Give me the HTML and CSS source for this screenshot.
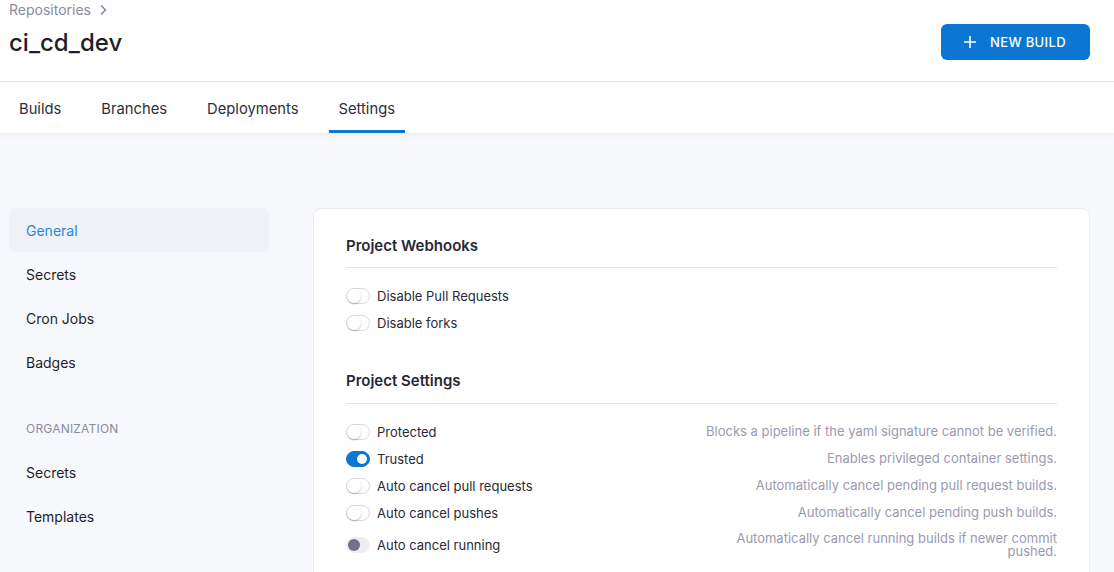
FILE: index.html
```html
<!DOCTYPE html>
<html>
<head>
<meta charset="utf-8">
<link rel="stylesheet" href="styles.css">
</head>
<body>
<header class="header">
  <div class="header-top">
    <div class="title-block">
      <div class="breadcrumb">Repositories <svg class="chev" width="10" height="12" viewBox="0 0 10 12"><path d="M3 1.5 L7.5 6 L3 10.5" fill="none" stroke="#8a8aa0" stroke-width="1.6"/></svg></div>
      <h1 class="title">ci_cd_dev</h1>
    </div>
    <button class="btn-new"><svg width="14" height="14" viewBox="0 0 14 14"><path d="M7 1v12M1 7h12" stroke="#fff" stroke-width="1.6"/></svg><span>NEW BUILD</span></button>
  </div>
  <nav class="tabs">
    <a class="tab">Builds</a>
    <a class="tab">Branches</a>
    <a class="tab">Deployments</a>
    <a class="tab active">Settings</a>
  </nav>
</header>
<main class="main">
  <aside class="sidebar">
    <a class="side-item active">General</a>
    <a class="side-item">Secrets</a>
    <a class="side-item">Cron Jobs</a>
    <a class="side-item">Badges</a>
    <div class="side-label">ORGANIZATION</div>
    <a class="side-item">Secrets</a>
    <a class="side-item">Templates</a>
  </aside>
  <section class="card">
    <h2 class="card-title">Project Webhooks</h2>
    <div class="rows">
      <div class="row"><span class="toggle"></span><span class="label">Disable Pull Requests</span></div>
      <div class="row"><span class="toggle"></span><span class="label">Disable forks</span></div>
    </div>
    <h2 class="card-title second">Project Settings</h2>
    <div class="rows">
      <div class="row"><span class="toggle"></span><span class="label">Protected</span><span class="desc">Blocks a pipeline if the yaml signature cannot be verified.</span></div>
      <div class="row"><span class="toggle on"></span><span class="label">Trusted</span><span class="desc">Enables privileged container settings.</span></div>
      <div class="row"><span class="toggle"></span><span class="label">Auto cancel pull requests</span><span class="desc">Automatically cancel pending pull request builds.</span></div>
      <div class="row"><span class="toggle"></span><span class="label">Auto cancel pushes</span><span class="desc">Automatically cancel pending push builds.</span></div>
      <div class="row tall"><span class="toggle disabled"></span><span class="label">Auto cancel running</span><span class="desc">Automatically cancel running builds if newer commit<br>pushed.</span></div>
    </div>
  </section>
</main>
</body>
</html>
```
FILE: styles.css
```css
* { box-sizing: border-box; }
html, body { margin: 0; padding: 0; }
body {
  font-family: Inter, "Noto Sans", sans-serif;
  background: #f7f8fb;
  color: #1f1f2b;
  width: 1114px;
  height: 572px;
  overflow: hidden;
}
.header {
  background: #fff;
  box-shadow: 0 2px 4px rgba(0,0,0,0.05);
  position: relative;
  z-index: 1;
}
.header-top {
  height: 82px;
  border-bottom: 1px solid #e3e3e8;
  display: flex;
  justify-content: space-between;
  padding: 0 24px 0 9px;
}
.breadcrumb {
  font-size: 14px;
  color: #8a8aa0;
  padding-top: 1px;
  line-height: 18px;
  display: flex;
  align-items: center;
  gap: 7px;
}
.title {
  margin: 0;
  margin-top: 9px;
  font-size: 24px;
  font-weight: 500;
  line-height: 30px;
  color: #1f1f2b;
}
.btn-new {
  margin-top: 24px;
  height: 36px;
  width: 149px;
  background: #0b77d3;
  border: 0;
  border-radius: 6px;
  color: #fff;
  font-family: Inter, sans-serif;
  font-size: 13px;
  font-weight: 500;
  letter-spacing: 0.35px;
  display: flex;
  align-items: center;
  justify-content: center;
  gap: 13px;
  padding: 0 2px 0 0;
}
.tabs {
  height: 51px;
  display: flex;
  padding-left: 9px;
  gap: 20px;
}
.tab {
  padding: 5px 10px 0 10px;
  font-size: 14.75px;
  color: #2e2e3a;
  display: flex;
  align-items: center;
  height: 51px;
  border-bottom: 3px solid transparent;
}
.tab.active {
  border-bottom-color: #0b77d3;
  padding-left: 9px;
  padding-right: 10px;
  margin-left: 1px;
}
.main {
  display: flex;
  padding: 75px 24px 0 9px;
  gap: 44px;
  align-items: flex-start;
}
.sidebar {
  width: 260px;
  display: flex;
  flex-direction: column;
  flex-shrink: 0;
}
.side-item {
  height: 44px;
  display: flex;
  align-items: center;
  padding-left: 17px;
  font-size: 14px;
  color: #1f1f2b;
  border-radius: 6px;
}
.side-item.active {
  background: #f0f2f7;
  color: #1f88e5;
}
.side-label {
  margin-top: 22px;
  height: 44px;
  display: flex;
  align-items: center;
  padding-left: 17px;
  font-size: 12px;
  color: #8a8aa0;
  letter-spacing: 0.2px;
}
.card {
  flex: 1;
  background: #fff;
  border: 1px solid #ececf1;
  border-radius: 8px;
  padding: 27px 32px 40px 32px;
  height: 400px;
}
.card-title {
  margin: 0;
  font-size: 15px;
  font-weight: 600;
  color: #272735;
  line-height: 20px;
  padding-bottom: 11px;
  border-bottom: 1px solid #e3e3ea;
}
.card-title.second {
  margin-top: 35px;
  padding-bottom: 12px;
}
.rows {
  padding-top: 14px;
  display: flex;
  flex-direction: column;
}
.row {
  height: 27px;
  display: flex;
  align-items: center;
  font-size: 13px;
  color: #2a2a36;
}
.row.tall {
  height: 37px;
}
.label { flex: 1; padding-left: 7px; }
.desc {
  text-align: right;
  color: #9a9ab0;
  font-size: 13px;
  line-height: 13px;
}
.toggle {
  width: 24px;
  height: 16px;
  border-radius: 8px;
  border: 1px solid #d9d9e2;
  background: #fff;
  position: relative;
  flex-shrink: 0;
}
.toggle::after {
  content: "";
  position: absolute;
  left: 0;
  top: 0;
  width: 14px;
  height: 14px;
  border-radius: 50%;
  background: #fff;
  box-shadow: 0 1px 2px rgba(0,0,0,0.25);
}
.toggle.on {
  background: #0b77d3;
  border-color: #0b77d3;
}
.toggle.on::after {
  top: 2px;
  width: 10px;
  height: 10px;
  box-shadow: none;
  left: 10px;
}
.toggle.disabled {
  background: #eeeef3;
  border-color: #eeeef3;
}
.toggle.disabled::after {
  background: #71718c;
  box-shadow: none;
  left: 1px;
  top: 1px;
  width: 12px;
  height: 12px;
}
```
